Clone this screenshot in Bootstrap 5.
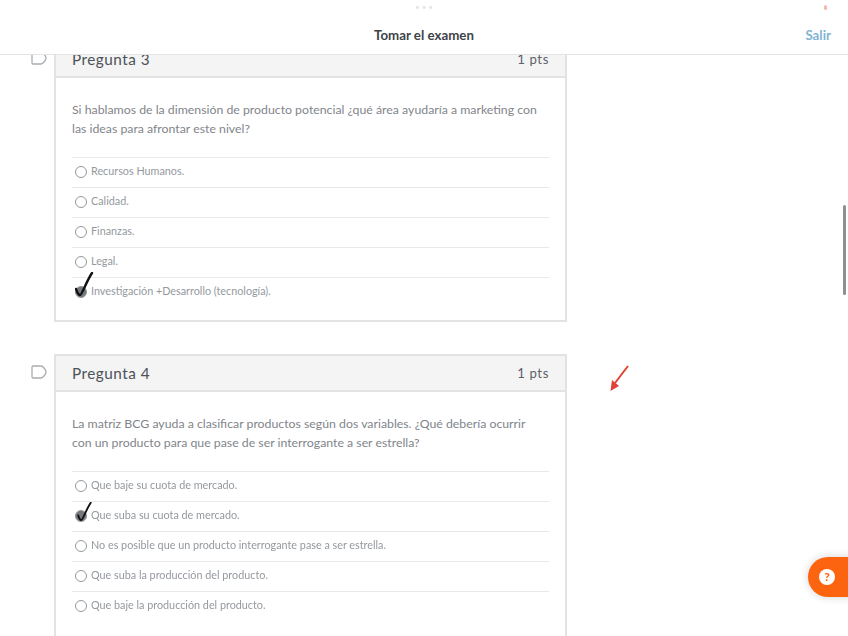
<!DOCTYPE html>
<html lang="es">

<head>
    <meta charset="UTF-8" />
    <meta name="viewport" content="width=device-width, initial-scale=1" />
    <title>Tomar el examen</title>
    <link href="https://cdn.jsdelivr.net/npm/bootstrap@5.3.0/dist/css/bootstrap.min.css" rel="stylesheet" />
    <style>
        html, body { height: 636px; overflow: hidden; background: #fff; }
        body { font-family: Lato, "Liberation Sans", sans-serif; color: #6b7177; position: relative; }
        .blur-layer { filter: blur(0.75px); height: 636px; overflow: hidden; position: relative; }
        .exam-top { height: 55px; background: #fff; border-bottom: 1px solid #e4e4e4; position: relative; z-index: 5; }
        .exam-title { font-size: 13.3px; font-weight: 700; color: #3d4349; padding-top: 27px; line-height: 17px; }
        .exam-exit { position: absolute; right: 17px; top: 27px; font-size: 13.3px; font-weight: 700; line-height: 17px; color: #7fb4d3; text-decoration: none; }
        .top-dots { position: absolute; left: 415px; top: 5px; color: #e4e4e4; font-size: 8px; line-height: 4px; letter-spacing: 2px; }
        .top-dot-red { position: absolute; left: 824px; top: 5px; width: 3px; height: 5px; border-radius: 2px; background: #f6b9aa; }
        .exam-col { width: 513px; margin-left: 54px; margin-top: -15px; }
        .quiz-wrap { position: relative; margin-bottom: 32px; }
        .quiz-card { border: 2px solid #e3e3e3; border-radius: 0; background: #fff; }
        .quiz-head { height: 36px; background: #f4f4f4; border-bottom: 2px solid #e3e3e3; padding: 0 16px; font-size: 15.3px; letter-spacing: .5px; color: #4c5258; }
        .quiz-pts { font-size: 13.2px; letter-spacing: .6px; color: #5c6268; margin-top: 2px; }
        .quiz-body { padding: 22px 16px 13px; }
        .quiz-wrap:last-child .quiz-body { padding-bottom: 44px; }
        .quiz-q { font-size: 12.3px; line-height: 19px; color: #7f858b; margin-bottom: 19px; height: 38px; padding-right: 5px; }
        .quiz-opt { height: 30px; border-top: 1px solid #e9e9e9; font-size: 10.8px; color: #94999e; position: relative; padding-left: 3px; padding-bottom: 2px; gap: 4px; }
        .opt-ring { width: 12px; height: 12px; border: 1.5px solid #94989c; border-radius: 50%; flex: none; background: #fff; }
        .opt-ring.picked { background: #75797d; }
        .pen-check { position: absolute; left: 3px; top: -6px; width: 22px; height: 28px; }
        .quiz-wrap:last-child .pen-check { top: 0; height: 22px; }
        .flag-mark { position: absolute; left: -23px; top: 11px; width: 16px; height: 14px; }
        .red-arrow { position: absolute; left: 609px; top: 364px; width: 21px; height: 30px; }
        .side-scroll { position: absolute; left: 843px; top: 205px; width: 3px; height: 90px; background: #8f8f8f; border-radius: 2px; z-index: 6; }
        .help-btn { position: absolute; left: 808px; top: 557px; width: 50px; height: 40px; border-radius: 20px 0 0 20px; background: #fd640f; box-shadow: 0 0 8px rgba(0,0,0,.18); z-index: 6; padding-left: 11px; }
        .help-dot { width: 16px; height: 16px; border-radius: 50%; background: #fff; color: #fd640f; font-size: 12px; font-weight: 900; line-height: 16px; text-align: center; }
    </style>
</head>

<body>
    <div class="blur-layer">
        <header class="exam-top text-center">
            <div class="top-dots">•••</div>
            <div class="top-dot-red"></div>
            <div class="exam-title">Tomar el examen</div>
            <a class="exam-exit" href="#">Salir</a>
        </header>

        <main class="exam-col" id="preguntas"></main>

        <svg class="red-arrow" viewBox="0 0 21 30">
            <path d="M19 2 L6 19" stroke="#e2432f" stroke-width="2" fill="none" />
            <path d="M1.5 27 L3 16 L10 22 Z" fill="#e0403a" />
        </svg>
        <div class="side-scroll"></div>
        <div class="help-btn d-flex align-items-center"><div class="help-dot">?</div></div>
    </div>

    <script>
        const preguntas = [
            {
                titulo: 'Pregunta 3',
                texto: 'Si hablamos de la dimensión de producto potencial ¿qué área ayudaría a marketing con las ideas para afrontar este nivel?',
                opciones: ['Recursos Humanos.', 'Calidad.', 'Finanzas.', 'Legal.', 'Investigación +Desarrollo (tecnología).'],
                marcada: 4
            },
            {
                titulo: 'Pregunta 4',
                texto: 'La matriz BCG ayuda a clasificar productos según dos variables. ¿Qué debería ocurrir con un producto para que pase de ser interrogante a ser estrella?',
                opciones: ['Que baje su cuota de mercado.', 'Que suba su cuota de mercado.', 'No es posible que un producto interrogante pase a ser estrella.', 'Que suba la producción del producto.', 'Que baje la producción del producto.'],
                marcada: 1
            }
        ];

        const check = '<svg class="pen-check" viewBox="0 0 22 28"><path d="M1 17 C2 20 3 23 5 23 C7 23 11 10 17 1" stroke="#111" stroke-width="2.4" fill="none" stroke-linecap="round"/></svg>';

        document.getElementById('preguntas').innerHTML = preguntas.map(p => `
            <section class="quiz-wrap">
                <svg class="flag-mark" viewBox="0 0 16 14"><path d="M2 1 H10 C12 1 15 5 15 7 C15 9 12 13 10 13 H2 Q1 13 1 12 V2 Q1 1 2 1 Z" fill="#fff" stroke="#a9adb1" stroke-width="1.3"/></svg>
                <div class="card quiz-card">
                    <div class="quiz-head d-flex justify-content-between align-items-center">
                        <span>${p.titulo}</span><span class="quiz-pts">1 pts</span>
                    </div>
                    <div class="quiz-body">
                        <p class="quiz-q">${p.texto}</p>
                        ${p.opciones.map((o, i) => `
                            <div class="quiz-opt d-flex align-items-center">
                                <span class="opt-ring ${i === p.marcada ? 'picked' : ''}"></span><span>${o}</span>
                                ${i === p.marcada ? check : ''}
                            </div>`).join('')}
                    </div>
                </div>
            </section>`).join('');
    </script>

    <script src="https://cdn.jsdelivr.net/npm/bootstrap@5.3.0/dist/js/bootstrap.bundle.min.js"></script>
</body>

</html>
